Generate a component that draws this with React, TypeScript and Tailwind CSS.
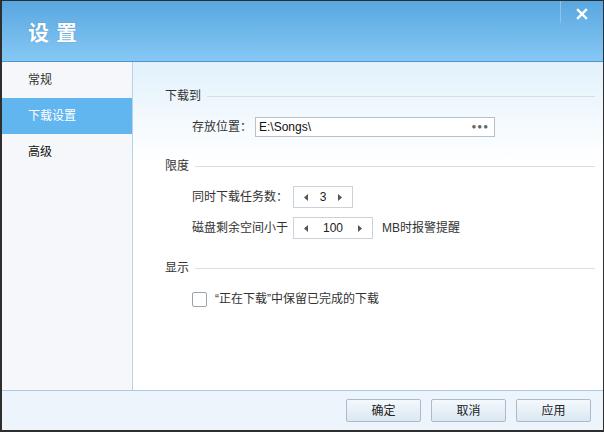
import React from "react";

const font = { fontFamily: '"Liberation Sans", "Noto Sans CJK SC", sans-serif' };

function Spinner({ value, width }: { value: string; width: string }) {
  return (
    <div className={`flex h-[22px] ${width} items-center justify-between border border-[#c9d2da] bg-white px-[10px] text-[12px] text-[#222]`}>
      <svg width="4" height="7" viewBox="0 0 4 7"><path d="M4 0 L0 3.5 L4 7 Z" fill="#555" /></svg>
      <span>{value}</span>
      <svg width="4" height="7" viewBox="0 0 4 7"><path d="M0 0 L4 3.5 L0 7 Z" fill="#555" /></svg>
    </div>
  );
}

function Section({ title, children }: { title: string; children?: React.ReactNode }) {
  return (
    <div className="flex flex-col">
      <div className="flex h-[16px] items-center gap-[6px] text-[12px] text-[#333]">
        <span className="whitespace-nowrap">{title}</span>
        <div className="h-px flex-1 bg-[#d6dfe7]" />
      </div>
      <div className="flex flex-col pl-[27px]">{children}</div>
    </div>
  );
}

function Btn({ label }: { label: string }) {
  return (
    <button className="h-[23px] w-[75px] rounded-[2px] border border-[#a9bccb] bg-gradient-to-b from-[#f4f9fd] to-[#dbe7f1] text-[12px] text-[#222]">
      {label}
    </button>
  );
}

export default function App() {
  return (
    <div style={font} className="flex h-[432px] w-[604px] flex-col border-t border-r border-l-2 border-b-2 border-[#2e2e2e] bg-white">
      <div className="relative flex h-[61px] shrink-0 items-center border-b border-[#4d97cf] bg-gradient-to-b from-[#58a7e0] to-[#86c8f4] pl-[26px] pt-[4px]">
        <span className="text-[21px] font-bold tracking-[7px] text-white" style={{ textShadow: "0 0 1px rgba(40,90,140,0.6)" }}>设置</span>
        <div className="absolute left-[558px] top-0 h-[22px] w-px bg-[#8cc4ec]" />
        <svg className="absolute left-[574px] top-[7px]" width="12" height="12" viewBox="0 0 12 12">
          <path d="M2 2 L10 10 M10 2 L2 10" stroke="white" strokeWidth="2.4" strokeLinecap="square" />
        </svg>
      </div>
      <div className="flex flex-1">
        <div className="flex w-[131px] flex-col border-r border-[#b9d3e6] bg-[#f5f7fa] text-[12px]">
          <div className="flex h-[36px] items-center pl-[26px] text-[#333]">常规</div>
          <div className="flex h-[36px] items-center bg-[#62b6ef] pl-[26px] text-white">下载设置</div>
          <div className="flex h-[36px] items-center pl-[26px] text-[#111]">高级</div>
        </div>
        <div className="flex flex-1 flex-col bg-gradient-to-b from-[#e2f1fc] via-white via-[30%] to-white pl-[32px] pr-[8px] pt-[26px]">
          <Section title="下载到">
            <div className="mt-[13px] flex items-center text-[12px] text-[#333]">
              <span className="w-[63px] whitespace-nowrap">存放位置：</span>
              <div className="flex h-[20px] w-[240px] items-center justify-between border border-[#b3c2cf] bg-white pl-[3px] pr-[5px] text-[12px] text-[#111]">
                <span>E:\Songs\</span>
                <span className="text-[8px] tracking-[1px] text-[#666]">●●●</span>
              </div>
            </div>
          </Section>
          <div className="h-[21px]" />
          <Section title="限度">
            <div className="mt-[12px] flex items-center gap-[8px] text-[12px] text-[#333]">
              <span className="w-[93px] whitespace-nowrap">同时下载任务数：</span>
              <Spinner value="3" width="w-[60px]" />
            </div>
            <div className="mt-[9px] flex items-center gap-[8px] text-[12px] text-[#333]">
              <span className="w-[93px] whitespace-nowrap">磁盘剩余空间小于</span>
              <Spinner value="100" width="w-[80px]" />
              <span className="ml-[1px] whitespace-nowrap">MB时报警提醒</span>
            </div>
          </Section>
          <div className="h-[21px]" />
          <Section title="显示">
            <div className="mt-[14px] flex items-center gap-[8px] text-[12px] text-[#333]">
              <div className="h-[15px] w-[15px] rounded-[2px] border border-[#9aa4ad] bg-white" />
              <span className="whitespace-nowrap">“正在下载”中保留已完成的下载</span>
            </div>
          </Section>
        </div>
      </div>
      <div className="flex h-[40px] shrink-0 items-center justify-end gap-[10px] border-t border-[#a9cce6] bg-[#eef4fb] pr-[12px]">
        <Btn label="确定" />
        <Btn label="取消" />
        <Btn label="应用" />
      </div>
    </div>
  );
}
